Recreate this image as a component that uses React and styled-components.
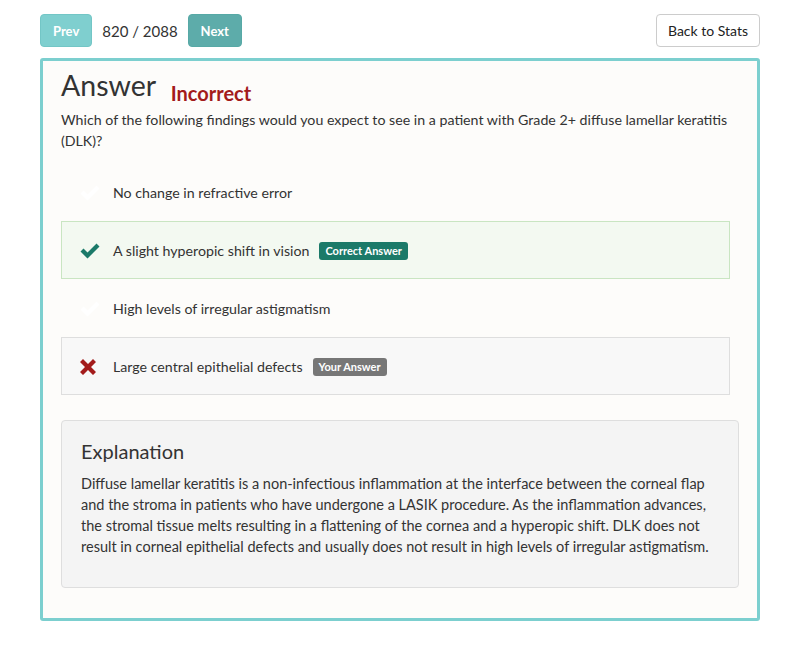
import React from "react"
import styled, { createGlobalStyle } from "styled-components"

const Global = createGlobalStyle`
    body {
        margin: 0;
        background: #fff;
        font-family: Lato, "Open Sans", sans-serif;
        color: #333;
        font-size: 14px;
    }
`

const Page = styled.div`
    width: 720px;
    padding: 14px 40px 24px;
`

const Toolbar = styled.div`
    display: flex;
    align-items: center;
    height: 33px;
    margin-bottom: 11px;

    .count {
        margin: 0 10px;
        font-size: 15px;
        color: #333;
    }

    .spacer {
        flex: 1;
    }
`

const NavButton = styled.button`
    height: 33px;
    padding: 0 12px;
    border: 1px solid ${(p) => (p.$dark ? "#57a9a6" : "#73c6c6")};
    border-radius: 4px;
    background: ${(p) => (p.$dark ? "#5dacaa" : "#7fcfcf")};
    color: #fff;
    font-family: Lato, sans-serif;
    font-weight: bold;
    font-size: 13px;
`

const StatsButton = styled.button`
    height: 33px;
    padding: 0 11px;
    border: 1px solid #ccc;
    border-radius: 4px;
    background: #fff;
    color: #222;
    font-family: Lato, sans-serif;
    font-size: 14px;
`

const Card = styled.div`
    border: 3px solid #7ccfcf;
    border-radius: 3px;
    background: #fdfcfa;
    padding: 8px 18px 30px;
`

const Title = styled.h2`
    margin: 0 0 -1px;
    font-size: 28.5px;
    line-height: 33px;
    font-weight: normal;
    color: #333;

    span {
        margin-left: 8px;
        font-size: 20px;
        font-weight: bold;
        color: #a31b1b;
        vertical-align: -5px;
    }
`

const Question = styled.p`
    margin: 0 0 12px;
    font-size: 14.2px;
    line-height: 21px;
`

const Options = styled.div`
    margin-right: 9px;
`

const toneBg = { correct: "#f3f9f1", wrong: "#f8f8f8", none: "transparent" }
const toneBorder = { correct: "#c9e5c2", wrong: "#dedede", none: "transparent" }

const Option = styled.div`
    display: flex;
    align-items: center;
    padding: 19px 17px 17px;
    line-height: 20px;
    font-size: 14.2px;
    background: ${(p) => toneBg[p.$tone]};
    border: 1px solid ${(p) => toneBorder[p.$tone]};

    .icon {
        width: 22px;
        margin-right: 12px;
        display: flex;
        justify-content: flex-start;
    }
`

const Badge = styled.span`
    margin-left: 10px;
    padding: 2px 6px;
    border-radius: 3px;
    background: ${(p) => p.$bg};
    color: #fff;
    font-size: 11px;
    font-weight: bold;
    line-height: 14px;
`

const Explanation = styled.div`
    margin-top: 25px;
    padding: 15px 19px 30px;
    background: #f4f4f4;
    border: 1px solid #dedede;
    border-radius: 4px;

    h3 {
        margin: 0 0 7px;
        font-size: 20px;
        font-weight: normal;
        line-height: 30px;
    }

    p {
        margin: 0;
        font-size: 14.5px;
        line-height: 21px;
    }
`

const Check = ({ color }) => (
    <svg width="22" height="18" viewBox="0 0 22 18">
        <path d="M1.5 9.5 L4.5 6.5 L8.5 10.5 L17.5 1.5 L20.5 4.5 L8.5 16.5 Z" fill={color} />
    </svg>
)

const Cross = () => (
    <svg width="18" height="18" viewBox="0 0 18 18">
        <path
            d="M1 4 L4 1 L9 6 L14 1 L17 4 L12 9 L17 14 L14 17 L9 12 L4 17 L1 14 L6 9 Z"
            fill="#a31b1b"
        />
    </svg>
)

const options = [
    { text: "No change in refractive error", tone: "none" },
    { text: "A slight hyperopic shift in vision", tone: "correct" },
    { text: "High levels of irregular astigmatism", tone: "none" },
    { text: "Large central epithelial defects", tone: "wrong" }
]

export default function App() {
    return (
        <Page>
            <Global />
            <Toolbar>
                <NavButton>Prev</NavButton>
                <span className="count">820 / 2088</span>
                <NavButton $dark>Next</NavButton>
                <div className="spacer" />
                <StatsButton>Back to Stats</StatsButton>
            </Toolbar>

            <Card>
                <Title>
                    Answer <span>Incorrect</span>
                </Title>
                <Question>
                    Which of the following findings would you expect to see in a
                    patient with Grade 2+ diffuse lamellar keratitis (DLK)?
                </Question>

                <Options>
                    {options.map((o) => (
                        <Option key={o.text} $tone={o.tone}>
                            <span className="icon">
                                {o.tone === "correct" && <Check color="#1b7a69" />}
                                {o.tone === "wrong" && <Cross />}
                                {o.tone === "none" && <Check color="#fff" />}
                            </span>
                            {o.text}
                            {o.tone === "correct" && (
                                <Badge $bg="#1b7a69">Correct Answer</Badge>
                            )}
                            {o.tone === "wrong" && (
                                <Badge $bg="#777">Your Answer</Badge>
                            )}
                        </Option>
                    ))}
                </Options>

                <Explanation>
                    <h3>Explanation</h3>
                    <p>
                        Diffuse lamellar keratitis is a non-infectious inflammation at
                        the interface between the corneal flap and the stroma in
                        patients who have undergone a LASIK procedure. As the
                        inflammation advances, the stromal tissue melts resulting in a
                        flattening of the cornea and a hyperopic shift. DLK does not
                        result in corneal epithelial defects and usually does not
                        result in high levels of irregular astigmatism.
                    </p>
                </Explanation>
            </Card>
        </Page>
    )
}
